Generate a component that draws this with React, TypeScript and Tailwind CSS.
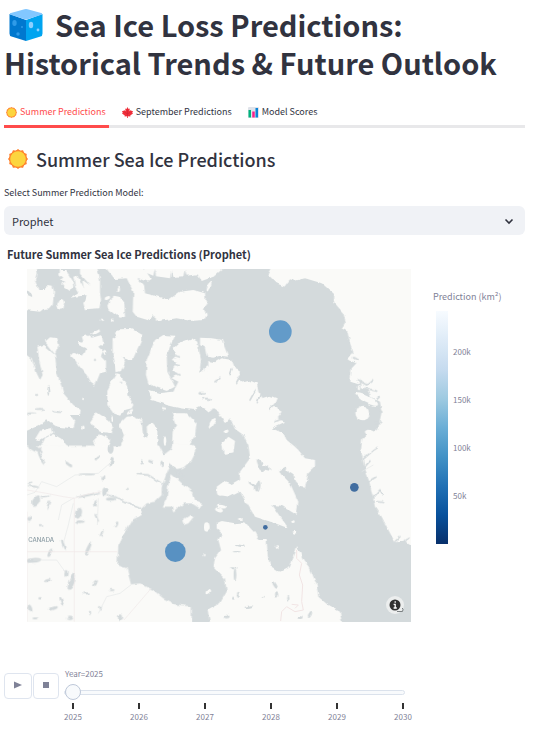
import { useState } from "react";

const WATER = "#d4dadc";
const LAND = "#fafaf8";

function IceCube() {
  return (
    <svg viewBox="0 0 34 34" className="mr-3 ml-[5px] inline-block size-[34px] align-[-5px]" role="img" aria-label="ice">
      <path d="M.5 6 17 12v21L2.500 28.500Q.5 28 .5 25.500Z" fill="#0078cf" />
      <path d="M33.500 6 17 12v21l14.500-4.500q2-.5 2-3z" fill="#00a4f0" />
      <path d="M1 5.200 15.500 1.200q1.500-.4 3 0L33 5.200v1.400L18.500 11.200q-1.500.4-3 0L1 6.600Z" fill="#82c7ff" />
      <ellipse cx="5.500" cy="15" rx="2.200" ry="3" fill="#2f9be8" />
      <circle cx="9" cy="26" r="1.700" fill="#2f9be8" />
      <circle cx="13" cy="19" r="1" fill="#2f9be8" />
      <ellipse cx="22" cy="17" rx="2.200" ry="3.200" fill="#8cd0ff" />
      <circle cx="29" cy="22" r="1.400" fill="#8cd0ff" />
    </svg>
  );
}

function Sun({ className }: { className: string }) {
  return (
    <svg viewBox="-10 -10 20 20" className={className} aria-hidden="true">
      {Array.from({ length: 12 }, (_, i) => (
        <path key={i} d="M0-9.500 3.600-6.500H-3.600Z" fill="#ff822d" stroke="#ff822d" strokeWidth="1" strokeLinejoin="round" transform={`rotate(${i * 30})`} />
      ))}
      <circle r="8.800" fill="#ff822d" />
      <circle r="7.800" fill="#fcd53f" />
    </svg>
  );
}

function Leaf() {
  return (
    <svg viewBox="0 0 22 22" className="size-[11px]" aria-hidden="true">
      <path d="M11 0 13 4l2.500-1-.6 5.500L18 6l1 2 3 0-1.500 3.500L22 13l-5.500 4 .3 2-5-.7V22h-1.600v-3.700l-5 .7.300-2L0 13l1.500-1.500L0 8l3 0 1-2 3.100 2.500L6.500 3 9 4Z" fill="#f02f3a" />
      <path d="M11 5v13M11 14 5 10M11 14l6-4" stroke="#c81f33" strokeWidth="1" />
    </svg>
  );
}

function BarsIcon() {
  return (
    <svg viewBox="0 0 22 22" className="size-[11px]" aria-hidden="true">
      <rect width="22" height="22" rx="2" fill="#dfe3ea" />
      <rect x="1" y="6" width="5" height="15" fill="#00b37d" />
      <rect x="8.500" y="9" width="5" height="12" fill="#f8208c" />
      <rect x="15" y="2" width="5" height="19" fill="#0a84d8" />
    </svg>
  );
}

const northWest = [
  "M10 0H45L50 25 45 45 55 75 75 75 85 60 98 62 102 80 98 120 90 130 70 132 60 140 40 138 10 135V85L38 97 38 88 10 60Z",
  "M120 15 140 15 145 30 158 50 160 65 150 78 135 68 125 55 136 50 120 44 130 38 118 28Z",
  "M160 35 172 32 192 68 186 44 212 62 180 26 180 0H230L240 45 240 85 243 105 238 130 195 133 190 115 200 90 150 98 175 82 165 65Z",
  "M250 0H365L392 40 385 50 352 38 372 60 375 85 420 97 445 105 480 80 520 75 555 85 557 105 563 115 552 130 560 150 553 165 510 168 470 160 405 170 403 150 385 166 350 155 338 140 340 80 320 40 285 42 270 25Z",
  "M375 0V22L400 32 404 12 408 34 450 40 454 14 460 36 490 34 494 14 500 32 532 28 545 48 580 35 605 14V0Z",
  "M262 122 270 105 285 92 300 95 313 120 315 155 300 158 280 145 264 132Z",
  "M150 270 160 260 185 275 195 262 200 250 175 240 175 228 190 230 185 212 200 208 215 218 245 210 250 235 235 245 250 260 243 275 258 290 258 320 240 325 225 362 210 352 195 325 175 300 165 285Z",
  "M210 208 238 193 240 200 218 212Z",
  "M285 200 300 193 335 192 368 210 365 230 345 275 330 285 305 278 315 292 303 318 290 322 283 285 278 270 278 220 290 215Z",
  "M290 325 300 328 325 370 325 390 340 420 335 430 315 435 300 452 280 445 262 420 262 375 275 350Z",
  "M465 212 430 210 405 225 390 260 380 285 378 330 385 355 405 365 440 378 465 365 455 345 442 320 440 270 450 245Z",
  "M460 250 475 235 515 220 532 230 538 260 543 285 540 310 550 320 560 302 575 300 580 325 590 305 620 310V435L590 415 575 435 565 440 540 425 520 435 480 430 440 420 420 412 395 405 388 375 420 384 460 380 475 350 455 340 475 325 455 315 470 290 455 285 470 270Z",
  "M540 218 575 220 590 222 605 224 625 275 600 272 580 278 560 275 555 250 540 240Z",
  "M75 230 90 217 112 220 117 240 105 268 90 250Z",
  "M10 260 35 280 50 325 60 345 68 330 58 290 52 245 70 240 105 270 110 320 120 350 130 385 160 420 182 435 180 450 150 450 165 470 160 490 110 485 80 465 60 480 10 502Z",
  "M45 522 60 497 95 488 100 503 60 525Z",
  "M55 560 75 520 100 507 125 522 155 560Z",
  "M210 470 230 442 265 465 280 490 275 505 240 500 225 490Z",
  "M222 525 240 508 270 522 265 560H230Z",
  "M295 480 320 455 345 452 365 475 370 512 382 518 380 485 395 470 412 490 412 570H292L315 510Z",
  "M455 445 500 445 530 475 525 512 510 535 520 560H455L458 500 468 480Z",
];

const northEast = [
  "M160 30 175 0H620V560H445L450 510 478 500 490 490 500 440 495 410 468 396 458 376 440 366 436 340 430 358 406 350 410 310 424 295 398 284 415 262 405 235 398 200 380 190 392 170 385 145 357 112 358 88 320 55 270 40 240 47 225 43 208 65 185 55Z",
  "M-20 288 0 292 20 280 50 285 60 310 75 320 66 340 80 350 100 345 125 355 130 380 140 400 165 392 185 400 175 425 200 440 185 460 210 470 170 490 205 505 215 525 240 545 250 555 270 580 300 585 300 605 280 625 270 668 250 665 235 630 205 612 192 620 225 655 250 710 245 750 200 722 172 720 220 790 180 775 120 755 95 715 75 680 45 695 10 690 5 665 25 650 50 660 75 645 75 620 105 580 100 540 85 510 60 492 45 460 30 475 10 440-20 420Z",
  "M25 560 22 535 40 515 60 528 55 562 25 565Z",
];

const southWest = [
  "M10 2H225L235-3 260 4H405L415 0 430 30 450 15 460 0H522L530 15 515 45 490 68 470 72 450 62 440 85 425 125 425 150 405 170 380 175 365 190 365 210 335 225 315 260 295 300 292 360 320 370 333 418 360 415 400 435 430 460 465 478 515 485V560H10Z",
  "M455 88 480 110 520 145 525 165 548 178 540 190 515 175 490 175 460 203 455 185 428 185 440 160 445 120Z",
  "M487 225 510 210 522 214 505 235 490 240Z",
];

const southEast =
  "M5 235 20 228 60 235 90 232 120 265 130 285 155 285 158 330 165 360 195 380 225 365 240 325 246 303 265 345 285 370 305 420 310 455 345 485 375 500 385 560H-10L-22 495 15 475 35 440 30 400-4 365 0 340 18 315 10 285 20 265 5 250Z";

/* Small isles: centre, radii, turn */
const isles = [
  [122, 118, 10, 13, 0], [295, 72, 5, 9, 0], [262, 99, 9, 5, -25], [567, 65, 5, 12, 25], [243, 165, 6, 3, -30],
  [277, 164, 5, 3, 0], [254, 262, 5, 7, 0], [190, 402, 4, 3, 0], [275, 460, 4, 8, 0], [190, 488, 4, 6, 0],
  [435, 528, 4, 14, 0], [577, 475, 6, 18, 30], [432, 430, 8, 3, 10], [330, 440, 12, 4, -40], [350, 462, 20, 4, 20],
  [560, 786, 9, 14, 0], [597, 735, 12, 6, 20], [600, 678, 10, 14, 0], [565, 980, 9, 6, -40], [554, 870, 4, 3, 0],
  [1040, 402, 38, 11, 28], [1028, 444, 22, 22, 0], [1018, 368, 5, 8, 0], [995, 282, 9, 5, 0], [1052, 505, 18, 9, 20],
  [770, 846, 6, 5, 0], [822, 770, 5, 4, 0], [824, 802, 6, 4, 0], [605, 725, 14, 5, 10], [660, 762, 6, 3, 0],
  [720, 754, 10, 4, 25], [610, 430, 8, 4, 40], [618, 500, 8, 5, -30],
];

/* Lakes and inlets drawn over the land */
const lakes = [
  [45, 550, 22, 9, 25], [62, 575, 4, 24, -25], [147, 598, 12, 5, 40], [272, 550, 9, 16, 0], [275, 590, 5, 14, 15],
  [232, 578, 4, 10, 50], [200, 628, 24, 3, 0], [250, 638, 5, 8, 30], [40, 665, 18, 3, 10], [30, 652, 8, 3, -30],
  [48, 708, 10, 16, 35], [75, 693, 14, 3, -10], [85, 720, 3, 12, 20], [28, 760, 6, 8, 0], [62, 780, 8, 3, 0],
  [175, 745, 10, 17, 20], [180, 770, 14, 4, 0], [230, 760, 12, 3, 60], [205, 690, 38, 3, -12], [255, 680, 8, 12, 0],
  [225, 715, 6, 12, 0], [272, 702, 14, 5, 0], [290, 778, 4, 9, 20], [245, 805, 3, 10, 30], [205, 850, 5, 22, 25],
  [130, 840, 4, 16, -20], [90, 865, 5, 12, 30], [40, 886, 24, 7, -5], [155, 950, 9, 26, 20],
  [138, 925, 5, 10, 0], [82, 948, 10, 5, -20], [100, 1030, 14, 5, -20], [125, 1010, 4, 16, -20], [30, 1030, 6, 12, -20],
  [150, 1060, 9, 5, 0], [225, 955, 4, 12, 40], [275, 975, 9, 3, 0], [300, 1058, 6, 10, 0], [240, 1030, 8, 4, 50],
  [200, 985, 10, 3, 0], [210, 1045, 3, 8, 0], [45, 1060, 8, 3, 0], [60, 1000, 5, 4, 0],
  [395, 590, 8, 4, 20], [425, 595, 4, 8, 0], [322, 672, 5, 3, 0], [365, 592, 4, 6, 0],
  [720, 600, 9, 20, -30], [735, 608, 20, 6, 20], [713, 665, 8, 18, 10], [700, 660, 16, 4, 30], [792, 618, 6, 14, 30],
  [660, 842, 14, 3, 10], [650, 860, 12, 2, 0], [640, 910, 10, 3, 10], [645, 930, 4, 16, 0], [655, 988, 4, 8, 0],
  [765, 960, 5, 12, -30], [770, 990, 5, 8, 0], [685, 1025, 14, 3, -10], [730, 995, 4, 3, 0], [805, 1000, 3, 7, 0],
  [840, 1058, 8, 4, 0], [870, 1050, 4, 10, 30], [620, 1055, 9, 5, 0], [640, 1000, 4, 4, 0],
  [85, 378, 3, 14, 0], [50, 390, 5, 3, 0], [60, 432, 18, 3, 0], [110, 440, 14, 3, 10], [35, 445, 14, 3, 0],
  [545, 385, 10, 4, 0], [565, 402, 12, 3, 10], [548, 400, 5, 3, 0], [225, 285, 4, 3, 0], [300, 350, 5, 2, 0],
];

const inlets = [
  "M352 628 385 630 425 655", "M265 690 300 702 345 722 362 730", "M450 600 495 638M465 610 478 635",
  "M630 328 636 312M650 355 662 332M690 405 705 378M712 412 722 385M750 432 765 418M765 470 785 462",
  "M1012 345 1040 360 1058 345M1035 370 1070 378M1000 278 1012 285M1065 408 1078 396M1070 430 1086 438M1065 475 1082 475",
  "M1030 582 1060 556 1072 548M1030 610 1050 588M1045 650 1068 636M1058 700 1080 675 1090 690M1070 710 1088 712M1125 830 1140 815M1150 830 1168 820",
  "M455 268 478 276M455 295 478 302M470 325 480 330M540 320 556 306M585 350 600 340",
];

const borders = "M21 675 80 685 130 695 163 700V1070M163 700 200 688 245 680M21 860H292M21 740V1070M312 1065 392 972";
const rivers =
  "M21 690 45 682 65 650 110 665 165 630 235 625 275 590M163 698 125 720 115 765M160 715 145 780 130 835M232 780 235 700M40 885 110 885 135 920M235 1045 260 995 300 985 335 958M1025 620 1060 600";
const labrador = "M830 855 830 880 845 895 838 930 848 960 845 1010 850 1035 825 1040 800 1025 785 1040 782 1068M825 1030 835 1020 815 1018";

function IceMap() {
  return (
    <svg viewBox="21 12 1152 1059" className="block h-auto w-full" role="img" aria-label="Map of sea ice predictions">
      <defs>
        <filter id="coast" filterUnits="userSpaceOnUse" x="0" y="-10" width="1200" height="1100" colorInterpolationFilters="sRGB">
          <feTurbulence type="fractalNoise" baseFrequency="0.05" numOctaves="2" seed="4" result="n" />
          <feDisplacementMap in="SourceGraphic" in2="n" scale="12" xChannelSelector="R" yChannelSelector="G" />
        </filter>
      </defs>
      <rect x="0" y="0" width="1200" height="1100" fill={WATER} />
      <g filter="url(#coast)" fill={LAND}>
        <g>{northWest.map((d) => <path key={d} d={d} />)}</g>
        <g transform="translate(585 0)">{northEast.map((d) => <path key={d} d={d} />)}</g>
        <g transform="translate(0 540)">{southWest.map((d) => <path key={d} d={d} />)}</g>
        <g transform="translate(585 540)">
          <path d={southEast} />
          <path d="M20-10H55V22L28 27Z" />
          <path d="M442-20 438 15 448 65 462 105 480 185 500 215 520 255 540 292 570 290 600 310V-20Z" />
        </g>
        {isles.map(([x, y, rx, ry, r]) => (
          <ellipse key={`${x}-${y}`} cx={x} cy={y} rx={rx} ry={ry} transform={`rotate(${r} ${x} ${y})`} />
        ))}
        <g fill={WATER}>
          {lakes.map(([x, y, rx, ry, r]) => (
            <ellipse key={`${x}-${y}`} cx={x} cy={y} rx={rx} ry={ry} transform={`rotate(${r} ${x} ${y})`} />
          ))}
        </g>
        <g fill="none" stroke={WATER} strokeWidth="5" strokeLinecap="round" strokeLinejoin="round">
          {inlets.map((d) => <path key={d} d={d} />)}
        </g>
      </g>
      <path d={rivers} fill="none" stroke="#e6e9e9" strokeWidth="2" />
      <path d={borders} fill="none" stroke="#f0e9e8" strokeWidth="2" />
      <path d={labrador} fill="none" stroke="#f1e4e4" strokeWidth="3" />
      <text x="102" y="830" textAnchor="end" fontSize="18" fontWeight="500" fill="#8a9ba3" fontFamily="Inter, sans-serif">CANADA</text>
      <circle cx="781" cy="200" r="34" fill="#639bc9" />
      <circle cx="466" cy="860" r="31" fill="#5891c2" />
      <circle cx="1003" cy="667" r="13" fill="#416da0" />
      <circle cx="736" cy="787" r="7" fill="#416da0" />
    </svg>
  );
}

const tabs = [
  { label: "Summer Predictions", icon: <Sun className="size-[11px]" /> },
  { label: "September Predictions", icon: <Leaf /> },
  { label: "Model Scores", icon: <BarsIcon /> },
];
const years = [2025, 2026, 2027, 2028, 2029, 2030];

export default function App() {
  const [tab, setTab] = useState(0);
  const [year, setYear] = useState(2025);
  return (
    <main className="min-h-screen bg-white pt-[5px] pr-7 pb-4 pl-1 font-['Noto_Sans_CJK_SC',sans-serif] text-[#31333f]">
      <h1 className="text-[29px] leading-[38px] font-bold">
        <IceCube />
        Sea Ice Loss Predictions: Historical Trends &amp; Future Outlook
      </h1>

      <div role="tablist" className="mt-[19px] flex gap-[11px] border-b-3 border-[#e8e8ea]">
        {tabs.map((t, i) => (
          <button
            key={t.label}
            role="tab"
            aria-selected={tab === i}
            onClick={() => setTab(i)}
            className={`-mb-[3px] flex h-7 items-start gap-[3px] border-b-3 pt-1 pr-[3px] pl-[2px] text-[9px] leading-4 ${tab === i ? "border-[#ff4b4b] text-[#ff4b4b]" : "border-transparent"}`}
          >
            <span className="flex h-4 items-center">{t.icon}</span>
            {t.label}
          </button>
        ))}
      </div>

      <h2 className="mt-[17px] flex items-center gap-2 pl-1 text-[18px] leading-7 font-medium">
        <Sun className="size-5" />
        Summer Sea Ice Predictions
      </h2>

      <label htmlFor="model" className="mt-3 block text-[9px] leading-4">
        Select Summer Prediction Model:
      </label>
      <div className="mt-[5px] grid items-center">
        <select id="model" className="col-start-1 row-start-1 h-[29px] w-full appearance-none rounded-md bg-[#f0f2f6] px-2 text-[11px] leading-5">
          <option>Prophet</option>
        </select>
        <svg viewBox="0 0 10 10" className="pointer-events-none col-start-1 row-start-1 mr-[11px] size-[10px] justify-self-end" aria-hidden="true">
          <path d="M1.500 3.500 5 7 8.500 3.500" fill="none" stroke="#31333f" strokeWidth="1.600" />
        </svg>
      </div>

      <h3 className="mt-[11px] pl-[3px] text-[11px] leading-4 font-bold">Future Summer Sea Ice Predictions (Prophet)</h3>

      <section className="mt-[7px] flex pl-[23px] text-[#7f8297]">
        <div className="relative min-w-0 flex-1">
          <IceMap />
          <button aria-label="Map attribution" className="absolute right-[7px] bottom-2 size-[18px] rounded-full bg-[#eceeee]">
            <svg viewBox="0 0 18 18" className="size-[18px]" aria-hidden="true">
              <path d="M11 15.500h5.500q1.500-3-.5-3.500" fill="none" stroke="#7c8183" />
              <circle cx="9" cy="9" r="5.500" fill="#303030" />
              <path d="M9.200 5.200v1.600M7.600 8.400h1.600v3.400M7.600 12h3.200" fill="none" stroke="#fff" strokeWidth="1.300" />
            </svg>
          </button>
        </div>
        <div className="w-[114px] shrink-0 pt-5 pl-[22px]">
          <p className="text-[9px] leading-4 whitespace-nowrap">Prediction (km²)</p>
          <div className="mt-[6px] flex pl-[3px]">
            <div className="h-[233px] w-3 bg-[linear-gradient(to_bottom,#f7fbff,#deebf7_12.500%,#c6dbef_25%,#9ecae1_37.500%,#6baed6_50%,#4292c6_62.500%,#2171b5_75%,#08519c_87.500%,#08306b)]" />
            <ul className="pt-[33px] pl-[5px] text-[8px] leading-4">
              <li className="mb-8">200k</li>
              <li className="mb-8">150k</li>
              <li className="mb-8">100k</li>
              <li>50k</li>
            </ul>
          </div>
        </div>
      </section>

      <section className="mt-11 flex pr-[120px] text-[8px] text-[#7f8297]">
        <div className="mt-[7px] mr-[5px] flex h-[26px] shrink-0 gap-px">
          <button aria-label="Play" className="flex w-7 items-center justify-center rounded-sm border border-[#dfe5ef]">
            <svg viewBox="0 0 8 8" className="mb-[2px] size-2"><path d="M0 .5 8 4 0 7.500Z" fill="#7f8297" /></svg>
          </button>
          <button aria-label="Stop" className="flex w-[26px] items-center justify-center rounded-sm border border-[#dfe5ef]">
            <svg viewBox="0 0 6 6" className="mb-[2px] size-[6px]"><path d="M0 0h6v6H0Z" fill="#7f8297" /></svg>
          </button>
        </div>
        <div className="min-w-0 flex-1">
          <label htmlFor="year" className="block pl-px leading-4">Year={year}</label>
          <input
            id="year"
            type="range"
            min={2025}
            max={2030}
            value={year}
            onChange={(e) => setYear(Number(e.target.value))}
            className="mt-[2px] block h-4 w-full appearance-none bg-transparent [&::-webkit-slider-runnable-track]:h-[5px] [&::-webkit-slider-runnable-track]:rounded-sm [&::-webkit-slider-runnable-track]:border [&::-webkit-slider-runnable-track]:border-[#dbe2ec] [&::-webkit-slider-runnable-track]:bg-[#f8fafc] [&::-webkit-slider-thumb]:-mt-[7px] [&::-webkit-slider-thumb]:size-4 [&::-webkit-slider-thumb]:appearance-none [&::-webkit-slider-thumb]:rounded-full [&::-webkit-slider-thumb]:border [&::-webkit-slider-thumb]:border-[#bec8d9] [&::-webkit-slider-thumb]:bg-[#f8fafc]"
          />
          <ol className="mt-[3px] -mr-[31px] -ml-[24px] grid grid-cols-6">
            {years.map((y) => (
              <li key={y} className="flex flex-col items-center">
                <span className="h-[6px] w-[2px] bg-[#333333]" />
                <span className="leading-4">{y}</span>
              </li>
            ))}
          </ol>
        </div>
      </section>
    </main>
  );
}
